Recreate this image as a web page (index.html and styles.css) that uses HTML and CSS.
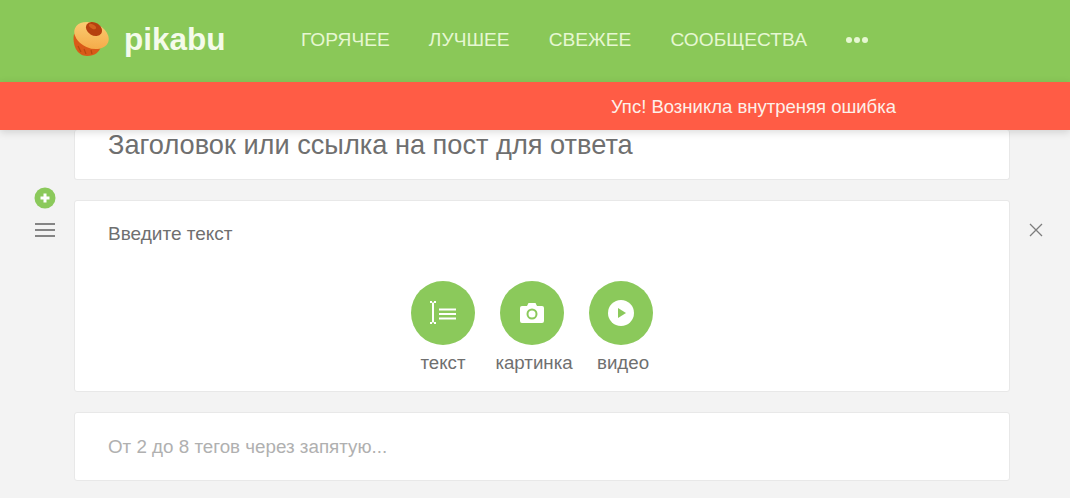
FILE: index.html
```html
<!DOCTYPE html>
<html lang="ru">
<head>
    <meta charset="UTF-8">
    <title>pikabu</title>
    <link rel="stylesheet" href="styles.css">
</head>
<body>
<header class="top-bar">
    <a class="logo" href="#">
        <svg class="logo-icon" width="38" height="36" viewBox="0 0 38 36">
            <defs>
                <linearGradient id="cap" x1="0" y1="0" x2="0.6" y2="1">
                    <stop offset="0" stop-color="#fbd27a"/>
                    <stop offset="1" stop-color="#f5ac4a"/>
                </linearGradient>
            </defs>
            <path d="M2 13 C0 24 5 35 15 35 C23 35 27 31 29 26 Z" fill="#d95a18"/>
            <path d="M6 25 L9 31 M12 28 L14 33 M19 29 L20 33" stroke="#b8480f" stroke-width="1.2" fill="none"/>
            <ellipse cx="19.5" cy="14.5" rx="18" ry="12.5" transform="rotate(24 19.5 14.5)" fill="url(#cap)"/>
            <ellipse cx="22" cy="8" rx="8.5" ry="6.5" transform="rotate(32 22 8)" fill="#b5400f"/>
            <ellipse cx="20.5" cy="5.5" rx="4" ry="2" transform="rotate(32 20.5 5.5)" fill="#d2601e"/>
        </svg>
        <span class="logo-text">pikabu</span>
    </a>
    <nav class="main-nav">
        <a href="#">ГОРЯЧЕЕ</a>
        <a href="#">ЛУЧШЕЕ</a>
        <a href="#">СВЕЖЕЕ</a>
        <a href="#">СООБЩЕСТВА</a>
        <span class="more-dots"><i></i><i></i><i></i></span>
    </nav>
</header>
<div class="error-bar">Упс! Возникла внутреняя ошибка</div>

<main class="editor">
    <div class="card title-card">Заголовок или ссылка на пост для ответа</div>

    <div class="block-row">
        <div class="block-tools">
            <svg width="22" height="22" viewBox="0 0 22 22">
                <circle cx="11" cy="11" r="10.5" fill="#8bc95b"/>
                <path d="M11 6.5 V15.5 M6.5 11 H15.5" stroke="#fff" stroke-width="3"/>
            </svg>
            <svg width="20" height="14" viewBox="0 0 20 14">
                <path d="M0 1 H20 M0 7 H20 M0 13 H20" stroke="#858585" stroke-width="2"/>
            </svg>
        </div>
        <div class="card block-card">
            <div class="block-label">Введите текст</div>
            <div class="block-types">
                <div class="block-type">
                    <span class="type-circle">
                        <svg width="30" height="28" viewBox="0 0 30 28">
                            <path d="M2 3 H4 M6 3 H8 M5 3.5 V23.5 M2 24 H4 M6 24 H8" stroke="#fff" stroke-width="2" fill="none"/>
                            <path d="M11 10.5 H28 M11 15 H28 M11 19.5 H28" stroke="#fff" stroke-width="2.2"/>
                        </svg>
                    </span>
                    <span class="type-name">текст</span>
                </div>
                <div class="block-type">
                    <span class="type-circle">
                        <svg width="24" height="20" viewBox="0 0 24 20">
                            <path d="M2 3 H7 L8.5 0 H15.5 L17 3 H22 Q24 3 24 5 V18 Q24 20 22 20 H2 Q0 20 0 18 V5 Q0 3 2 3 Z" fill="#fff"/>
                            <circle cx="12" cy="11" r="4.5" fill="none" stroke="#8bc95b" stroke-width="2"/>
                        </svg>
                    </span>
                    <span class="type-name">картинка</span>
                </div>
                <div class="block-type">
                    <span class="type-circle">
                        <svg width="26" height="26" viewBox="0 0 26 26">
                            <circle cx="13" cy="13" r="13" fill="#fff"/>
                            <path d="M10 8 L18 13 L10 18 Z" fill="#8bc95b"/>
                        </svg>
                    </span>
                    <span class="type-name">видео</span>
                </div>
            </div>
        </div>
        <div class="block-close">
            <svg width="14" height="14" viewBox="0 0 14 14">
                <path d="M1 1 L13 13 M13 1 L1 13" stroke="#7d7d7d" stroke-width="1.3"/>
            </svg>
        </div>
    </div>

    <div class="card tags-card">От 2 до 8 тегов через запятую...</div>
</main>
</body>
</html>
```

FILE: styles.css
```css
* {
    box-sizing: border-box;
    margin: 0;
    padding: 0;
}

html, body {
    height: 100%;
    overflow: hidden;
}

body {
    background-color: #f3f3f3;
    font-family: "Liberation Sans", Arial, sans-serif;
    color: #6f6f6f;
}

a {
    text-decoration: none;
}

.top-bar {
    height: 82px;
    background-color: #8ac858;
    display: flex;
    align-items: center;
    padding: 0 0 4px 72px;
}

.logo {
    display: flex;
    align-items: center;
    width: 229px;
}

.logo-icon {
    margin-right: 14px;
}

.logo-text {
    font-size: 31.5px;
    font-weight: bold;
    color: #f4fbea;
}

.main-nav {
    display: flex;
    align-items: center;
    gap: 39px;
    margin-top: 1px;
}

.main-nav a {
    font-size: 19.2px;
    color: #e6f7d2;
}

.more-dots {
    display: flex;
    gap: 2px;
}

.more-dots i {
    width: 6px;
    height: 6px;
    border-radius: 50%;
    background-color: #e6f7d2;
}

.error-bar {
    position: relative;
    z-index: 2;
    height: 48px;
    background-color: #ff5c45;
    color: #fdf0ea;
    font-size: 18.5px;
    display: flex;
    align-items: center;
    justify-content: flex-end;
    padding: 1px 174px 0 0;
    box-shadow: 0 2px 8px rgba(0, 0, 0, .15);
}

.editor {
    display: flex;
    flex-direction: column;
    gap: 20px;
}

.card {
    background-color: #fff;
    border: 1px solid #e8e8e8;
    border-radius: 3px;
    width: 936px;
}

.title-card {
    margin-left: 74px;
    height: 50px;
    border-top: 0;
    padding: 0 33px;
    font-size: 27.2px;
    line-height: 30px;
}

.block-row {
    display: flex;
    height: 192px;
}

.block-tools {
    width: 74px;
    margin-top: -13px;
    padding-left: 15px;
    display: flex;
    flex-direction: column;
    align-items: center;
    gap: 14px;
}

.block-card {
    padding: 23px 33px 0;
}

.block-label {
    font-size: 19px;
    line-height: 20px;
}

.block-types {
    display: flex;
    justify-content: center;
    gap: 25px;
    margin-top: 37px;
    padding-right: 20px;
}

.block-type {
    width: 64px;
    display: flex;
    flex-direction: column;
    align-items: center;
    gap: 8px;
}

.type-circle {
    width: 64px;
    height: 64px;
    border-radius: 50%;
    background-color: #8bc95b;
    display: flex;
    align-items: center;
    justify-content: center;
}

.type-name {
    font-size: 18.7px;
    line-height: 20px;
    white-space: nowrap;
}

.block-type + .block-type .type-name {
    padding-left: 4px;
}

.block-close {
    width: 52px;
    padding-top: 23px;
    display: flex;
    justify-content: center;
    align-items: flex-start;
}

.tags-card {
    margin-left: 74px;
    height: 69px;
    padding: 0 33px;
    font-size: 18.8px;
    line-height: 67px;
    color: #b0b0b0;
}
```
